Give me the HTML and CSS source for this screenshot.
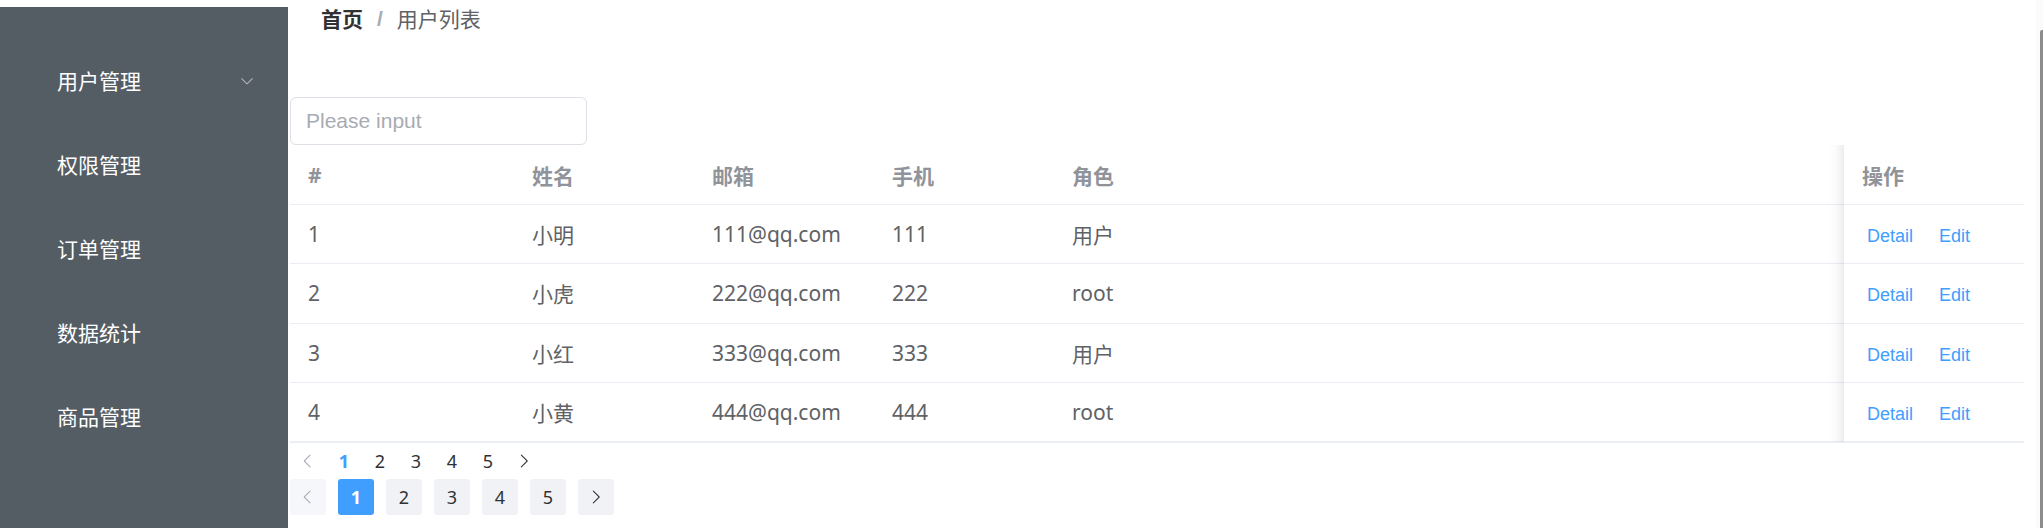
FILE: index.html
```html
<!DOCTYPE html>
<html lang="zh-CN">
<head>
<meta charset="utf-8">
<title>用户列表</title>
<link rel="stylesheet" href="styles.css">
</head>
<body>
<div class="layout">
  <aside class="aside">
    <ul class="menu">
      <li class="menu-item">
        <span>用户管理</span>
        <svg class="menu-arrow" viewBox="0 0 1024 1024"><path fill="currentColor" d="M831.872 340.864 512 652.672 192.128 340.864a30.592 30.592 0 0 0-42.752 0 29.12 29.12 0 0 0 0 41.6L489.664 714.24a32 32 0 0 0 44.672 0l340.288-331.712a29.120 29.120 0 0 0 0-41.728 30.592 30.592 0 0 0-42.752 0z"/></svg>
      </li>
      <li class="menu-item"><span>权限管理</span></li>
      <li class="menu-item"><span>订单管理</span></li>
      <li class="menu-item"><span>数据统计</span></li>
      <li class="menu-item"><span>商品管理</span></li>
    </ul>
  </aside>
  <main class="main">
    <nav class="breadcrumb">
      <span class="crumb crumb-home">首页</span>
      <span class="crumb-sep">/</span>
      <span class="crumb">用户列表</span>
    </nav>
    <div class="search">
      <input class="search-input" type="text" placeholder="Please input">
    </div>
    <div class="table-wrap">
      <table class="table">
        <colgroup>
          <col class="c-idx"><col class="c-name"><col class="c-mail"><col class="c-phone"><col><col class="c-op">
        </colgroup>
        <thead>
          <tr><th>#</th><th>姓名</th><th>邮箱</th><th>手机</th><th>角色</th><th class="fixed">操作</th></tr>
        </thead>
        <tbody>
          <tr><td>1</td><td>小明</td><td>111@qq.com</td><td>111</td><td>用户</td><td class="fixed"><a class="op-btn">Detail</a><a class="op-btn">Edit</a></td></tr>
          <tr><td>2</td><td>小虎</td><td>222@qq.com</td><td>222</td><td>root</td><td class="fixed"><a class="op-btn">Detail</a><a class="op-btn">Edit</a></td></tr>
          <tr><td>3</td><td>小红</td><td>333@qq.com</td><td>333</td><td>用户</td><td class="fixed"><a class="op-btn">Detail</a><a class="op-btn">Edit</a></td></tr>
          <tr><td>4</td><td>小黄</td><td>444@qq.com</td><td>444</td><td>root</td><td class="fixed"><a class="op-btn">Detail</a><a class="op-btn">Edit</a></td></tr>
        </tbody>
      </table>
    </div>
    <div class="pager pager-small">
      <span class="pg-btn is-disabled"><svg class="chev" viewBox="0 0 1024 1024"><path fill="currentColor" d="M609.408 149.376 277.76 489.6a32 32 0 0 0 0 44.672l331.648 340.352a29.12 29.12 0 0 0 41.728 0 30.592 30.592 0 0 0 0-42.752L339.264 511.936l311.872-319.872a30.592 30.592 0 0 0 0-42.688 29.12 29.12 0 0 0-41.728 0z"/></svg></span>
      <span class="pg-num is-active">1</span>
      <span class="pg-num">2</span>
      <span class="pg-num">3</span>
      <span class="pg-num">4</span>
      <span class="pg-num">5</span>
      <span class="pg-btn"><svg class="chev" viewBox="0 0 1024 1024"><path fill="currentColor" d="M340.864 149.312a30.592 30.592 0 0 0 0 42.752L652.736 512 340.864 831.872a30.592 30.592 0 0 0 0 42.752 29.12 29.12 0 0 0 41.728 0L714.24 534.336a32 32 0 0 0 0-44.672L382.592 149.376a29.12 29.12 0 0 0-41.728 0z"/></svg></span>
    </div>
    <div class="pager pager-bg">
      <span class="pg-btn is-disabled"><svg class="chev" viewBox="0 0 1024 1024"><path fill="currentColor" d="M609.408 149.376 277.76 489.6a32 32 0 0 0 0 44.672l331.648 340.352a29.12 29.12 0 0 0 41.728 0 30.592 30.592 0 0 0 0-42.752L339.264 511.936l311.872-319.872a30.592 30.592 0 0 0 0-42.688 29.12 29.12 0 0 0-41.728 0z"/></svg></span>
      <span class="pg-num is-active">1</span>
      <span class="pg-num">2</span>
      <span class="pg-num">3</span>
      <span class="pg-num">4</span>
      <span class="pg-num">5</span>
      <span class="pg-btn"><svg class="chev" viewBox="0 0 1024 1024"><path fill="currentColor" d="M340.864 149.312a30.592 30.592 0 0 0 0 42.752L652.736 512 340.864 831.872a30.592 30.592 0 0 0 0 42.752 29.12 29.12 0 0 0 41.728 0L714.24 534.336a32 32 0 0 0 0-44.672L382.592 149.376a29.12 29.12 0 0 0-41.728 0z"/></svg></span>
    </div>
  </main>
</div>
<div class="scrollbar"><span class="scroll-thumb"></span></div>
</body>
</html>
```

FILE: styles.css
```css
* { box-sizing: border-box; }

html, body {
  margin: 0;
  padding: 0;
  background: #fff;
}

body {
  font-family: "Noto Sans", "Noto Sans CJK SC", sans-serif;
  color: #606266;
  overflow: hidden;
}

.layout {
  display: flex;
  height: 528px;
}

/* ---------- sidebar ---------- */
.aside {
  width: 288px;
  flex: none;
  margin-top: 7px;
  padding-top: 32px;
  background: #545c64;
}

.menu {
  list-style: none;
  margin: 0;
  padding: 0;
}

.menu-item {
  height: 84px;
  display: flex;
  align-items: center;
  justify-content: space-between;
  padding: 0 33px 0 57px;
  color: #fff;
  font-size: 21px;
  line-height: 1;
}

.menu-arrow {
  width: 16px;
  height: 16px;
  color: #b9bdc2;
}

/* ---------- main ---------- */
.main {
  flex: 1;
  min-width: 0;
  padding-left: 2px;
  margin-right: 19px;
}

.breadcrumb {
  padding: 7px 0 0 31px;
  height: 30px;
  font-size: 21px;
  line-height: 22px;
  display: flex;
  align-items: center;
}

.crumb { color: #606266; }
.crumb-home { color: #303133; font-weight: 700; }
.crumb-sep {
  color: #a8abb2;
  font-weight: 700;
  margin: 0 14px;
  font-family: "Liberation Sans", sans-serif;
}

.search {
  margin-top: 67px;
}

.search-input {
  display: block;
  width: 297px;
  height: 48px;
  border: 1px solid #dcdfe6;
  border-radius: 6px;
  padding: 0 15px;
  font-family: "Liberation Sans", Arial, sans-serif;
  font-size: 21px;
  color: #606266;
  outline: none;
  background: #fff;
}

.search-input::placeholder { color: #a8abb2; }

/* ---------- table ---------- */
.table-wrap {
  border-bottom: 1px solid #ebeef5;
}

.table {
  width: 100%;
  table-layout: fixed;
  border-collapse: separate;
  border-spacing: 0;
  font-size: 21px;
}

.c-idx { width: 224px; }
.c-name, .c-mail, .c-phone { width: 180px; }
.c-op { width: 180px; }

.table th,
.table td {
  padding: 0 18px;
  text-align: left;
  vertical-align: middle;
  border-bottom: 1px solid #ebeef5;
  white-space: nowrap;
  background: #fff;
}

.table thead tr { height: 60px; }
.table tbody tr { height: 59.33px; }

.table th {
  color: #909399;
  font-weight: 700;
}

.table td { color: #606266; }

.table .fixed { position: relative; }

.table .fixed::before {
  content: "";
  position: absolute;
  top: 0;
  bottom: -1px;
  left: -15px;
  width: 15px;
  box-shadow: inset -15px 0 15px -15px rgba(0, 0, 0, 0.15);
  pointer-events: none;
}

.op-btn {
  display: inline-block;
  padding: 0 5px;
  font-family: "Liberation Sans", Arial, sans-serif;
  font-size: 18px;
  color: #409eff;
  cursor: pointer;
}

.op-btn + .op-btn { margin-left: 16px; }

/* ---------- pagination ---------- */
.pager {
  display: flex;
  align-items: center;
  height: 36px;
  font-size: 18px;
  color: #303133;
}

.pg-btn,
.pg-num {
  width: 36px;
  height: 36px;
  display: flex;
  align-items: center;
  justify-content: center;
  color: #303133;
}

.pg-btn.is-disabled { color: #a8abb2; }

.pg-num.is-active {
  color: #409eff;
  font-weight: 700;
}

.chev {
  width: 18px;
  height: 18px;
}

.pager-bg { gap: 12px; }

.pager-bg .pg-btn,
.pager-bg .pg-num {
  background: #f0f2f5;
  border-radius: 3px;
}

.pager-bg .pg-btn.is-disabled { background: #f5f7fa; }

.pager-bg .pg-num.is-active {
  background: #409eff;
  color: #fff;
}

/* ---------- window scrollbar ---------- */
.scrollbar {
  position: fixed;
  top: 0;
  right: 0;
  bottom: 0;
  width: 7px;
  background: #fbfbfb;
}

.scroll-thumb {
  position: absolute;
  top: 30px;
  right: 0;
  bottom: 0;
  width: 3px;
  background: #8c8c8c;
  border-radius: 2px 0 0 0;
}
```
